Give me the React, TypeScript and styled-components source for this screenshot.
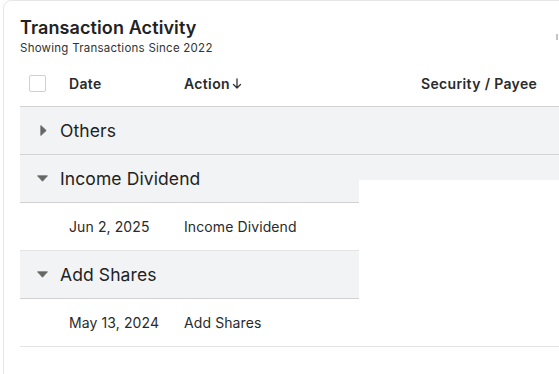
import * as React from 'react';
import styled, { createGlobalStyle } from 'styled-components';

const GlobalStyle = createGlobalStyle`
  html, body {
    margin: 0;
    padding: 0;
    background: #ffffff;
  }
  body {
    font-family: Inter, 'Noto Sans', sans-serif;
    color: #222;
    overflow: hidden;
  }
`;

const Card = styled.div`
  position: relative;
  margin-left: 3px;
  width: 600px;
  height: 420px;
  border: 1px solid #e6e6e6;
  border-radius: 8px;
  background: #fff;
  padding: 15px 0 0 16px;
  box-sizing: border-box;
`;

const Title = styled.h2`
  margin: 0;
  font-size: 18px;
  line-height: 24px;
  font-weight: 600;
  color: #222;
  letter-spacing: 0.1px;
`;

const Subtitle = styled.div`
  margin-top: 1px;
  font-size: 11.5px;
  line-height: 14px;
  letter-spacing: 0.25px;
  color: #333;
`;

const Table = styled.div`
  margin-top: 5px;
  display: flex;
  flex-direction: column;
`;

const Grid = styled.div`
  display: grid;
  grid-template-columns: 49px 115px 237px 1fr;
  align-items: center;
`;

const HeaderRow = styled(Grid)`
  height: 46px;
  border-bottom: 1px solid #d2d2d2;
`;

const HeaderCell = styled.div`
  font-size: 14px;
  font-weight: 600;
  letter-spacing: 0.35px;
  color: #2a2a2a;
  display: flex;
  align-items: center;
  gap: 2px;
`;

const Checkbox = styled.span`
  margin-left: 9px;
  width: 15px;
  height: 15px;
  border: 1.5px solid #cfcfcf;
  border-radius: 2px;
  display: block;
`;

const GroupRow = styled.div`
  height: 47px;
  display: flex;
  align-items: center;
  background: #f2f3f5;
  border-bottom: 1px solid #d2d2d2;
  font-size: 17.5px;
  letter-spacing: 0.1px;
  color: #222;
`;

const CaretBox = styled.span`
  width: 40px;
  display: flex;
  justify-content: center;
  padding-left: 4px;
  box-sizing: border-box;
`;

const DataRow = styled(Grid)`
  height: 47px;
  border-bottom: 1px solid #e4e4e4;
`;

const DataCell = styled.div`
  font-size: 14px;
  letter-spacing: 0.1px;
  color: #2a2a2a;
`;

const Cover = styled.div`
  position: absolute;
  left: 355px;
  top: 179px;
  right: 0;
  height: 163px;
  background: #fff;
`;

const EdgeMark = styled.span`
  position: absolute;
  left: 552px;
  top: 33px;
  width: 2px;
  height: 6px;
  background: #c4c4c4;
`;

function Caret({ open }: { open: boolean }) {
  return open ? (
    <svg width="11" height="7" viewBox="0 0 11 7">
      <path d="M0.5 0.8 L10.5 0.8 L5.5 6.2 Z" fill="#666" strokeLinejoin="round" stroke="#666" strokeWidth="0.8" />
    </svg>
  ) : (
    <svg width="7" height="11" viewBox="0 0 7 11" style={{ marginLeft: 2 }}>
      <path d="M0.8 0.5 L6.2 5.5 L0.8 10.5 Z" fill="#666" strokeLinejoin="round" stroke="#666" strokeWidth="0.8" />
    </svg>
  );
}

function SortArrow() {
  return (
    <svg width="10" height="11" viewBox="0 0 10 11">
      <path d="M5 1 V10 M1.5 6.5 L5 10 L8.5 6.5" fill="none" stroke="#333" strokeWidth="1.3" strokeLinecap="round" strokeLinejoin="round" />
    </svg>
  );
}

const groups = [
  { name: 'Others', open: false, rows: [] as { date: string; action: string }[] },
  { name: 'Income Dividend', open: true, rows: [{ date: 'Jun 2, 2025', action: 'Income Dividend' }] },
  { name: 'Add Shares', open: true, rows: [{ date: 'May 13, 2024', action: 'Add Shares' }] },
];

export default function App(): React.ReactElement {
  return (
    <>
      <GlobalStyle />
      <Card>
        <Title>Transaction Activity</Title>
        <Subtitle>Showing Transactions Since 2022</Subtitle>
        <Table>
          <HeaderRow>
            <Checkbox />
            <HeaderCell>Date</HeaderCell>
            <HeaderCell>
              Action
              <SortArrow />
            </HeaderCell>
            <HeaderCell>Security / Payee</HeaderCell>
          </HeaderRow>
          {groups.map(g => (
            <React.Fragment key={g.name}>
              <GroupRow>
                <CaretBox>
                  <Caret open={g.open} />
                </CaretBox>
                {g.name}
              </GroupRow>
              {g.rows.map(r => (
                <DataRow key={r.date}>
                  <span />
                  <DataCell>{r.date}</DataCell>
                  <DataCell>{r.action}</DataCell>
                  <span />
                </DataRow>
              ))}
            </React.Fragment>
          ))}
        </Table>
        <Cover />
        <EdgeMark />
      </Card>
    </>
  );
}
